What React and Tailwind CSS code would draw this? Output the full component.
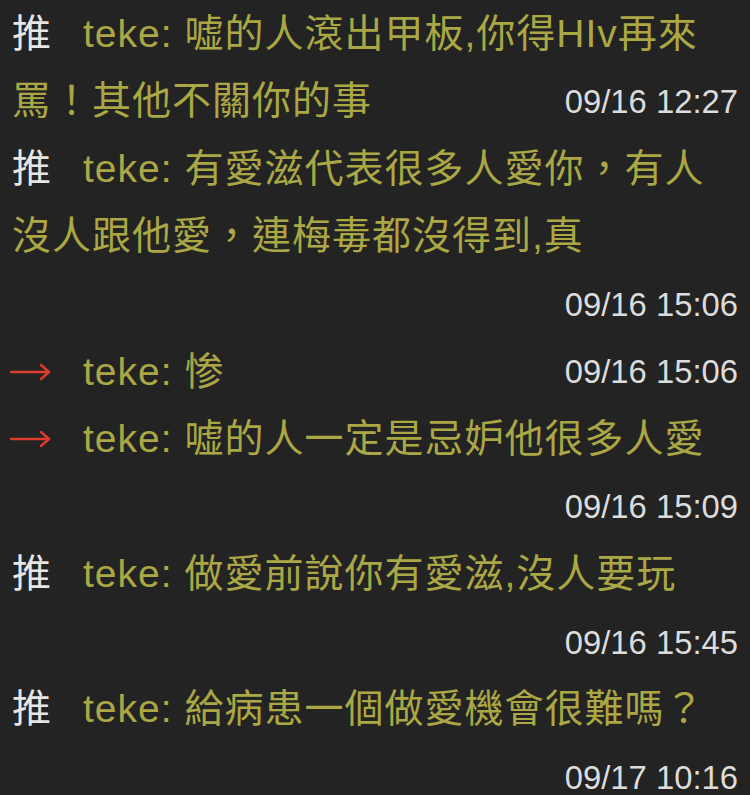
import React from 'react';

const FONT = { fontFamily: '"Liberation Sans", "Noto Sans CJK TC", sans-serif' };

function Arrow() {
  return (
    <svg width="42" height="20" viewBox="0 0 42 20" className="-ml-[2px]" fill="none" stroke="#dd3b2c" strokeWidth="2.4" strokeLinecap="round" strokeLinejoin="round">
      <path d="M1 10 H39" />
      <path d="M31 3 L39 10 L31 17" />
    </svg>
  );
}

function Prefix({ type }) {
  if (type === 'arrow') {
    return <span className="w-[71px] shrink-0 flex items-center"><Arrow /></span>;
  }
  return <span className="w-[71px] shrink-0 text-[#e6e6e6]">推</span>;
}

function Line({ children }) {
  return <div className="h-[67.6px] flex items-center whitespace-nowrap">{children}</div>;
}

function Time({ children }) {
  return <span className="ml-auto text-[32.8px] tracking-normal text-[#dcdcdc] pr-[12px]">{children}</span>;
}

function Text({ children }) {
  return <span className="text-[#aaa744]">{children}</span>;
}

export default function App() {
  return (
    <div className="w-[750px] h-[795px] overflow-hidden bg-[#232323] pl-[12px] text-[39px] tracking-[1px]" style={FONT}>
      <Line><Prefix /><Text>teke: 嘘的人滾出甲板,你得HIv再來</Text></Line>
      <Line><Text>罵！其他不關你的事</Text><Time>09/16 12:27</Time></Line>
      <Line><Prefix /><Text>teke: 有愛滋代表很多人愛你，有人</Text></Line>
      <Line><Text>沒人跟他愛，連梅毒都沒得到,真</Text></Line>
      <Line><Time>09/16 15:06</Time></Line>
      <Line><Prefix type="arrow" /><Text>teke: 惨</Text><Time>09/16 15:06</Time></Line>
      <Line><Prefix type="arrow" /><Text>teke: 嘘的人一定是忌妒他很多人愛</Text></Line>
      <Line><Time>09/16 15:09</Time></Line>
      <Line><Prefix /><Text>teke: 做愛前說你有愛滋,沒人要玩</Text></Line>
      <Line><Time>09/16 15:45</Time></Line>
      <Line><Prefix /><Text>teke: 給病患一個做愛機會很難嗎？</Text></Line>
      <Line><Time>09/17 10:16</Time></Line>
    </div>
  );
}
